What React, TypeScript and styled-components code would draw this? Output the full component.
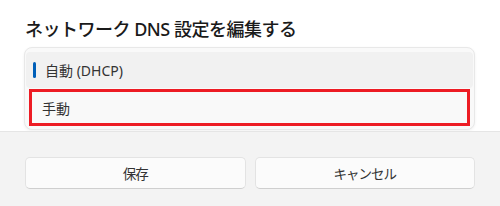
import styled, { createGlobalStyle } from "styled-components"

const GlobalStyle = createGlobalStyle`
  html, body {
    margin: 0;
    padding: 0;
    background: #ffffff;
  }
  body {
    font-family: "Noto Sans", "Noto Sans CJK JP", sans-serif;
    color: #1b1b1b;
  }
  * { box-sizing: border-box; }
`

const options = [
  { label: '自動 (DHCP)', selected: true, marked: false },
  { label: '手動', selected: false, marked: true },
]

const App = () => {
  return <>
    <GlobalStyle />
    <Dialog>
      <Content>
        <Title>ネットワーク DNS 設定を編集する</Title>
        <ListBox>
          {options.map(o => (
            <Option key={o.label} $selected={o.selected} $marked={o.marked}>
              {o.selected && <Indicator />}
              {o.label}
            </Option>
          ))}
        </ListBox>
      </Content>
      <Footer>
        <Button>保存</Button>
        <Button>キャンセル</Button>
      </Footer>
    </Dialog>
  </>
}

const Dialog = styled.div`
  width: 500px;
  height: 206px;
  display: flex;
  flex-direction: column;
  background: #ffffff;
  overflow: hidden;
`

const Content = styled.div`
  padding: 18px 25px 0 24px;
`

const Title = styled.h2`
  margin: 0;
  padding-left: 1px;
  font-size: 18px;
  line-height: 22px;
  font-weight: 500;
  color: #1a1a1a;
  letter-spacing: -0.5px;
`

const ListBox = styled.div`
  margin-top: 7px;
  width: 451px;
  background: #f9f9f9;
  border: 1px solid #e8e8e8;
  border-radius: 8px;
  padding: 4px 1px 3px;
  box-shadow: 0 1px 3px rgba(0, 0, 0, 0.06);
`

const Option = styled.div<{ $selected: boolean, $marked: boolean }>`
  position: relative;
  display: flex;
  align-items: center;
  font-size: 14px;
  color: #333333;
  height: ${p => p.$marked ? 37 : 36}px;
  border-radius: 4px;
  background: ${p => p.$selected ? '#f1f1f1' : 'transparent'};
  padding-left: ${p => p.$marked ? 10 : 19}px;
  margin: ${p => p.$marked ? '1px 3px 0' : '0'};
  border: ${p => p.$marked ? '3px solid #ed1c24' : '0'};
  ${p => p.$marked && 'border-radius: 0;'}
`

const Indicator = styled.span`
  position: absolute;
  left: 7px;
  top: 10px;
  width: 3px;
  height: 16px;
  border-radius: 2px;
  background: #005fb8;
`

const Footer = styled.div`
  flex: 1;
  margin-top: 1px;
  background: #f3f3f3;
  border-top: 1px solid #e5e5e5;
  padding: 25px 25px 0;
  display: grid;
  grid-template-columns: 1fr 1fr;
  column-gap: 9px;
  align-content: start;
`

const Button = styled.button`
  height: 32px;
  font-family: "Noto Sans", "Noto Sans CJK JP", sans-serif;
  font-size: 13.5px;
  letter-spacing: -1px;
  color: #333333;
  background: #fbfbfb;
  border: 1px solid #e3e3e3;
  border-bottom-color: #cfcfcf;
  border-radius: 5px;
  padding: 0;
`

export default App
